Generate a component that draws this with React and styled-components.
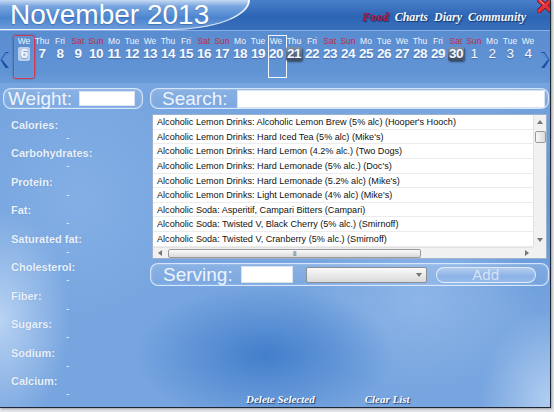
import React from 'react';
import styled, { createGlobalStyle, css } from 'styled-components';

const GlobalStyle = createGlobalStyle`
  html, body { margin: 0; padding: 0; background: #e2e4e8; }
  body { width: 554px; height: 412px; overflow: hidden; font-family: "Liberation Sans", Arial, sans-serif; }
`;

const Window = styled.div`
  position: relative;
  width: 550px;
  height: 407px;
  display: flex;
  flex-direction: column;
  overflow: hidden;
  border-right: 1px solid #1d2733;
  border-bottom: 1px solid #1d2733;
  box-shadow: 1px 1px 2px rgba(0, 0, 0, 0.3);
  background:
    radial-gradient(ellipse 70px 110px at 0px 320px, rgba(200, 222, 248, 0.8), transparent 100%),
    radial-gradient(ellipse 130px 70px at 265px 355px, rgba(58, 120, 200, 0.85), transparent 100%),
    radial-gradient(ellipse 120px 90px at 420px 300px, rgba(160, 195, 238, 0.55), transparent 100%),
    radial-gradient(ellipse 70px 90px at 550px 400px, rgba(190, 215, 245, 0.8), transparent 100%),
    radial-gradient(ellipse 90px 120px at 540px 200px, rgba(80, 135, 210, 0.6), transparent 100%),
    radial-gradient(ellipse 110px 120px at 80px 200px, rgba(140, 182, 234, 0.6), transparent 100%),
    #77a5df;
`;

/* ---------- header ---------- */
const Header = styled.header`
  position: relative;
  flex: none;
  height: 30px;
  display: flex;
  justify-content: space-between;
  background: linear-gradient(180deg, #4a80c9 0%, #2d65b5 55%, #3870bd 100%);
  border-bottom: 1px solid rgba(160, 195, 240, 0.7);
`;

const TitlePlate = styled.div`
  width: 250px;
  box-sizing: border-box;
  padding: 1px 0 0 10px;
  font-size: 28px;
  line-height: 28px;
  color: #fff;
  white-space: nowrap;
  background: linear-gradient(180deg, #c6daf3 0%, #78a5df 22%, #4a84ce 62%, #6c9cda 100%);
  border-right: 2px solid rgba(255, 255, 255, 0.85);
  border-bottom: 1px solid rgba(255, 255, 255, 0.7);
  border-bottom-right-radius: 80px 30px;
  text-shadow: 0 1px 1px rgba(20, 60, 120, 0.35);
`;

const Nav = styled.nav`
  display: flex;
  align-items: flex-end;
  gap: 6px;
  padding: 0 24px 5px 0;
`;

const NavLink = styled.span`
  font-family: "Liberation Serif", "DejaVu Serif", serif;
  font-style: italic;
  font-weight: bold;
  font-size: 12px;
  color: ${({ active }) => (active ? '#b5123c' : '#f4f8ff')};
  text-shadow: 1px 1px 1px rgba(10, 30, 70, 0.7);
`;

const CloseBtn = styled.div`
  position: absolute;
  top: -2px;
  right: -3px;
  width: 16px;
  height: 15px;
`;

/* ---------- calendar ---------- */
const CalendarRow = styled.div`
  flex: none;
  height: 52px;
  display: flex;
  align-items: center;
  background: linear-gradient(180deg, #5a8cd0 0%, #6194d5 80%, #6a9bd9 100%);
`;

const Arrow = styled.div`
  flex: none;
  width: ${({ side }) => (side === 'left' ? '15px' : '13px')};
  display: flex;
  justify-content: ${({ side }) => (side === 'left' ? 'flex-start' : 'flex-end')};
  padding-top: 6px;
`;

const Days = styled.div`
  display: flex;
  height: 42px;
  align-self: flex-start;
  margin-top: 5px;
`;

const DayCol = styled.div`
  position: relative;
  width: 18px;
  display: flex;
  flex-direction: column;
  align-items: center;
  ${({ mark }) => mark === 'selected' && css`
    &::after {
      content: '';
      position: absolute;
      top: -1px; left: -2px; right: -2px; bottom: -1px;
      border: 1.5px solid #d2364f;
      border-radius: 3px;
      box-shadow: 0 0 2px rgba(0, 0, 0, 0.35), inset 0 0 1px rgba(255,255,255,0.4);
    }
  `}
  ${({ mark }) => mark === 'today' && css`
    &::after {
      content: '';
      position: absolute;
      top: -1px; left: 1px; right: -2px; bottom: 0;
      border: 1px solid #f2f6ff;
    }
  `}
`;

const DayName = styled.span`
  font-size: 8.5px;
  line-height: 10px;
  color: ${({ weekend }) => (weekend ? '#c8284a' : '#eef4fc')};
  margin-bottom: 1px;
`;

const DayNum = styled.span`
  font-size: 13.5px;
  line-height: 14px;
  letter-spacing: -0.6px;
  font-weight: ${({ faded }) => (faded ? 'normal' : 'bold')};
  color: #f6f9ff;
  padding: 0 1px;
  border-radius: 2px;
  text-shadow: 0 1px 1px rgba(20, 50, 100, 0.35);
  ${({ tone }) => tone === 'light' && css`
    background: #b9cfec;
    padding: 0 3px;
  `}
  ${({ tone }) => tone === 'dark' && css`
    background: linear-gradient(180deg, #8090a6 0%, #3c4a5f 100%);
    box-shadow: 1px 1px 2px rgba(0, 0, 0, 0.5);
  `}
`;

/* ---------- content ---------- */
const Content = styled.div`
  flex: 1;
  display: grid;
  grid-template-columns: 140px 399px;
  column-gap: 7px;
  padding-left: 3px;
  margin-top: 5px;
`;

const Column = styled.div`
  display: flex;
  flex-direction: column;
`;

const FieldBox = styled.div`
  display: flex;
  align-items: center;
  height: ${({ h }) => h || 21}px;
  box-sizing: border-box;
  padding: 0 3px 0 ${({ pl }) => pl || 5}px;
  border: 1.5px solid rgba(228, 240, 255, 0.85);
  border-radius: 8px;
  background: linear-gradient(180deg, rgba(255, 255, 255, 0.14), rgba(255, 255, 255, 0.04));
  box-shadow: inset 0 0 2px rgba(255, 255, 255, 0.45);
`;

const FieldLabel = styled.span`
  font-size: 19px;
  line-height: 19px;
  color: #eef4fd;
  white-space: nowrap;
`;

const TextInput = styled.div`
  flex: ${({ grow }) => (grow ? 1 : 'none')};
  width: ${({ w }) => w}px;
  height: ${({ h }) => h || 15}px;
  margin-left: ${({ ml }) => ml}px;
  background: #fff;
  border: 1px solid #d8e4f2;
  box-sizing: border-box;
`;

const NutrientList = styled.div`
  margin-top: 9px;
  display: flex;
  flex-direction: column;
`;

const Nutrient = styled.div`
  height: 28.45px;
  padding-left: 8px;
  display: flex;
  flex-direction: column;
`;

const NutrientLabel = styled.span`
  font-size: 11px;
  line-height: 14px;
  font-weight: bold;
  color: #e9f1fb;
  text-shadow: 0 0 1px rgba(60, 100, 160, 0.4);
`;

const NutrientValue = styled.span`
  font-size: 10px;
  line-height: 12px;
  color: #e3ecf8;
  padding-left: 55px;
`;

/* ---------- list ---------- */
const ListBox = styled.div`
  margin: 5px 2px 0 2px;
  height: 145px;
  box-sizing: border-box;
  border: 1px solid #9fb2cb;
  background: #fff;
  display: grid;
  grid-template-columns: 1fr 13px;
  grid-template-rows: 1fr 11px;
`;

const Rows = styled.div`
  overflow: hidden;
`;

const Row = styled.div`
  height: 14.65px;
  box-sizing: border-box;
  padding-left: 4px;
  font-size: 9.1px;
  line-height: 14px;
  color: #111;
  white-space: nowrap;
  border-bottom: 1px solid #ececec;
`;

const VScroll = styled.div`
  background: #f1f1f1;
  border-left: 1px solid #e2e2e2;
  display: flex;
  flex-direction: column;
  align-items: center;
`;

const ScrollBtn = styled.div`
  flex: none;
  width: ${({ w }) => (w ? `${w}px` : '100%')};
  height: ${({ size }) => size || 13}px;
  display: flex;
  align-items: center;
  justify-content: center;
`;

const VThumb = styled.div`
  width: 11px;
  height: 12px;
  margin-top: 2px;
  border: 1px solid #9a9a9a;
  border-radius: 2px;
  box-sizing: border-box;
  background: linear-gradient(90deg, #f8f8f8, #dcdcdc);
`;

const Spacer = styled.div`
  flex: 1;
`;

const HScroll = styled.div`
  background: #f1f1f1;
  border-top: 1px solid #e2e2e2;
  display: flex;
  align-items: center;
`;

const HThumb = styled.div`
  width: 253px;
  height: 9px;
  margin-left: 2px;
  border: 1px solid #9a9a9a;
  border-radius: 2px;
  box-sizing: border-box;
  background: linear-gradient(180deg, #fbfbfb, #dadada);
  display: flex;
  align-items: center;
  justify-content: center;
  font-size: 6px;
  line-height: 6px;
  color: #555;
  letter-spacing: -0.5px;
`;

const Corner = styled.div`
  background: #f1f1f1;
`;

/* ---------- serving ---------- */
const Select = styled.div`
  width: 121px;
  height: 16px;
  margin-left: 13px;
  box-sizing: border-box;
  border: 1px solid #8a8d93;
  border-radius: 2px;
  background: linear-gradient(180deg, #fafafa, #d9d9d9);
  display: flex;
  align-items: center;
  justify-content: flex-end;
  padding-right: 4px;
`;

const AddButton = styled.div`
  width: 100px;
  height: 16px;
  margin-left: 9px;
  box-sizing: border-box;
  border: 1px solid rgba(240, 246, 255, 0.8);
  border-radius: 9px;
  background: linear-gradient(180deg, #b3cdef 0%, #8cb2e6 60%, #98bbea 100%);
  display: flex;
  align-items: center;
  justify-content: center;
  font-size: 15px;
  color: rgba(255, 255, 255, 0.6);
`;

/* ---------- footer ---------- */
const Footer = styled.footer`
  margin-top: auto;
  height: 13px;
  display: flex;
  gap: 50px;
  padding: 0 0 1px 96px;
`;

const FooterLink = styled.span`
  font-family: "Liberation Serif", "DejaVu Serif", serif;
  font-style: italic;
  font-weight: bold;
  font-size: 11px;
  line-height: 12px;
  color: #f6f9ff;
  text-shadow: 1px 1px 1px rgba(10, 30, 70, 0.75);
`;

const Chevron = ({ dir }) => (
  <svg width="10" height="18" viewBox="0 0 10 18">
    <g transform={dir === 'right' ? 'translate(10 0) scale(-1 1)' : undefined}>
      <path d="M9 1 L2.5 9 L9 17 L5.5 17 L0.5 9 L5.5 1 Z" fill="#1b52a6" />
      <path d="M8 2 L6 2 L1.5 9 L3 9 Z" fill="#5f93dc" />
    </g>
  </svg>
);

const Tri = ({ dir }) => {
  const pts = {
    up: '0,4 3,0 6,4',
    down: '0,0 6,0 3,4',
    left: '4,0 4,6 0,3',
    right: '0,0 0,6 4,3',
  }[dir];
  const w = dir === 'up' || dir === 'down' ? 6 : 4;
  const h = dir === 'up' || dir === 'down' ? 4 : 6;
  return (
    <svg width={w} height={h} viewBox={`0 0 ${w} ${h}`}>
      <polygon points={pts} fill="#777" />
    </svg>
  );
};

const names = ['We', 'Thu', 'Fri', 'Sat', 'Sun', 'Mo', 'Tue'];
const days = Array.from({ length: 29 }, (_, i) => ({
  name: names[i % 7],
  num: i < 25 ? i + 6 : i - 24,
  next: i >= 25,
}));

const nutrients = ['Calories:', 'Carbohydrates:', 'Protein:', 'Fat:', 'Saturated fat:', 'Cholesterol:', 'Fiber:', 'Sugars:', 'Sodium:', 'Calcium:'];

const foods = [
  "Alcoholic Lemon Drinks: Alcoholic Lemon Brew (5% alc) (Hooper's Hooch)",
  "Alcoholic Lemon Drinks: Hard Iced Tea (5% alc) (Mike's)",
  "Alcoholic Lemon Drinks: Hard Lemon (4.2% alc.) (Two Dogs)",
  "Alcoholic Lemon Drinks: Hard Lemonade (5% alc.) (Doc's)",
  "Alcoholic Lemon Drinks: Hard Lemonade (5.2% alc) (Mike's)",
  "Alcoholic Lemon Drinks: Light Lemonade (4% alc) (Mike's)",
  "Alcoholic Soda: Asperitif, Campari Bitters (Campari)",
  "Alcoholic Soda: Twisted V, Black Cherry (5% alc.) (Smirnoff)",
  "Alcoholic Soda: Twisted V, Cranberry (5% alc.) (Smirnoff)",
];

const App = () => {
  return (
    <>
      <GlobalStyle />
      <Window>
        <Header>
          <TitlePlate>November 2013</TitlePlate>
          <Nav>
            <NavLink active>Food</NavLink>
            <NavLink>Charts</NavLink>
            <NavLink>Diary</NavLink>
            <NavLink>Community</NavLink>
          </Nav>
          <CloseBtn>
            <svg width="16" height="15" viewBox="0 0 16 15">
              <path d="M2 2 L14 13 M14 2 L2 13" stroke="#7a0a10" strokeWidth="5" strokeLinecap="round" />
              <path d="M2 2 L14 13 M14 2 L2 13" stroke="#e2333b" strokeWidth="3.4" strokeLinecap="round" />
              <path d="M3 2.5 L7 6" stroke="#ff9a9a" strokeWidth="1" strokeLinecap="round" />
            </svg>
          </CloseBtn>
        </Header>

        <CalendarRow>
          <Arrow side="left"><Chevron dir="left" /></Arrow>
          <Days>
            {days.map((d, i) => (
              <DayCol key={i} mark={i === 0 ? 'selected' : d.num === 20 ? 'today' : undefined}>
                <DayName weekend={d.name === 'Sat' || d.name === 'Sun'}>{d.name}</DayName>
                <DayNum
                  faded={d.next}
                  tone={i === 0 ? 'light' : (d.num === 21 || d.num === 30) && !d.next ? 'dark' : undefined}
                >
                  {d.num}
                </DayNum>
              </DayCol>
            ))}
          </Days>
          <Arrow side="right"><Chevron dir="right" /></Arrow>
        </CalendarRow>

        <Content>
          <Column>
            <FieldBox pl={4}>
              <FieldLabel>Weight:</FieldLabel>
              <TextInput w={56} ml={7} />
            </FieldBox>
            <NutrientList>
              {nutrients.map((n) => (
                <Nutrient key={n}>
                  <NutrientLabel>{n}</NutrientLabel>
                  <NutrientValue>-</NutrientValue>
                </Nutrient>
              ))}
            </NutrientList>
          </Column>

          <Column>
            <FieldBox pl={11}>
              <FieldLabel>Search:</FieldLabel>
              <TextInput grow h={18} ml={10} />
            </FieldBox>
            <ListBox>
              <Rows>
                {foods.map((f) => <Row key={f}>{f}</Row>)}
              </Rows>
              <VScroll>
                <ScrollBtn size={14}><Tri dir="up" /></ScrollBtn>
                <VThumb />
                <Spacer />
                <ScrollBtn size={14}><Tri dir="down" /></ScrollBtn>
              </VScroll>
              <HScroll>
                <ScrollBtn size={13} w={13}><Tri dir="left" /></ScrollBtn>
                <HThumb>|||</HThumb>
                <Spacer />
                <ScrollBtn size={13} w={13}><Tri dir="right" /></ScrollBtn>
              </HScroll>
              <Corner />
            </ListBox>
            <FieldBox h={23} pl={12} style={{ marginTop: 4 }}>
              <FieldLabel>Serving:</FieldLabel>
              <TextInput w={52} h={17} ml={8} />
              <Select><Tri dir="down" /></Select>
              <AddButton>Add</AddButton>
            </FieldBox>
            <Footer>
              <FooterLink>Delete Selected</FooterLink>
              <FooterLink>Clear List</FooterLink>
            </Footer>
          </Column>
        </Content>
      </Window>
    </>
  );
};

export default App;
